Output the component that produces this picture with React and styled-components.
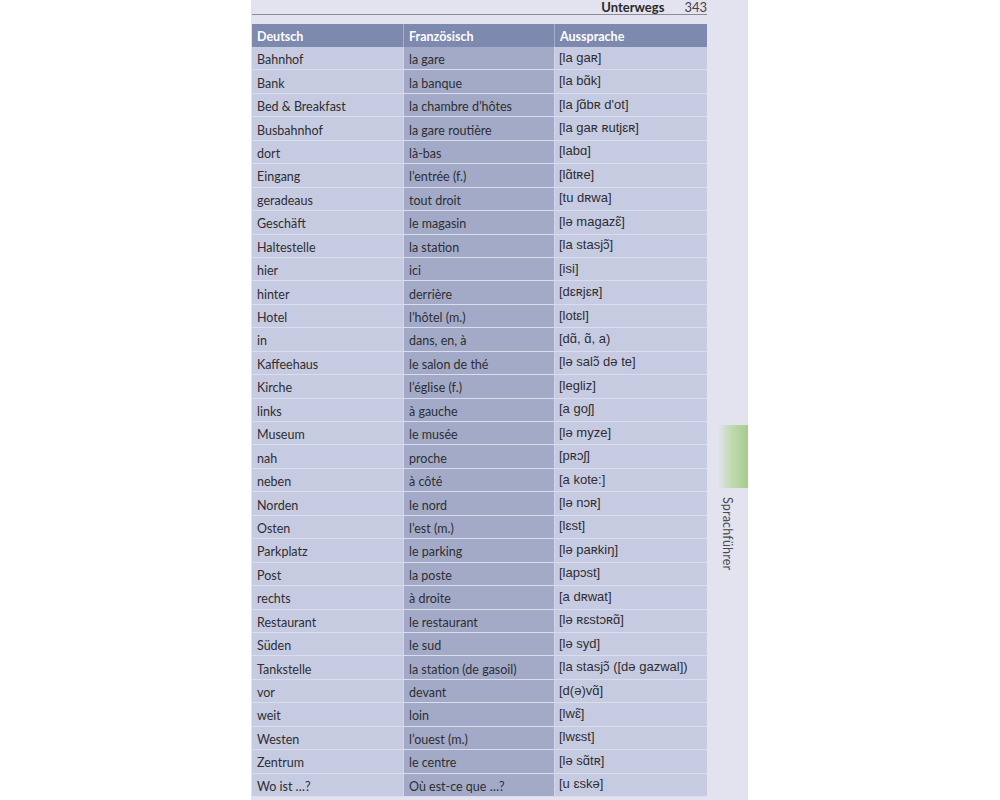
import React from "react";
import styled, { createGlobalStyle } from "styled-components";

const Global = createGlobalStyle`
  html, body { margin: 0; padding: 0; background: #ffffff; }
  body { font-family: Lato, "Open Sans", sans-serif; }
`;

const Page = styled.div`
  margin-left: 251px;
  width: 497px;
  height: 800px;
  background: #e2e3ef;
  display: flex;
  overflow: hidden;
`;

const Main = styled.div`
  width: 455px;
  margin-left: 1px;
  display: flex;
  flex-direction: column;
`;

const RunningHead = styled.div`
  height: 14px;
  border-bottom: 1px solid #8a8c98;
  display: flex;
  justify-content: flex-end;
  align-items: center;
  gap: 20px;
  font-size: 13px;
  line-height: 14px;
  color: #2a2a2a;
  margin-bottom: 9px;
`;

const Section = styled.span`
  font-weight: 700;
`;

const PageNo = styled.span`
  font-weight: 400;
  color: #444;
`;

const Table = styled.div`
  display: grid;
  grid-template-columns: 152px 151px 152px;
  grid-template-rows: 23px;
  grid-auto-rows: 23.45px;
`;

const HeadCell = styled.div`
  background: #7d89af;
  color: #ffffff;
  font-weight: 700;
  font-size: 12.5px;
  padding-left: 5px;
  padding-top: 1px;
  display: flex;
  align-items: center;
  border-right: ${(p) => (p.$last ? "none" : "1px solid #a7aecb")};
  box-sizing: border-box;
`;

const Cell = styled.div`
  box-sizing: border-box;
  background: ${(p) => (p.$dark ? "#a2aac8" : "#c6cbe1")};
  border-bottom: 1px solid #dadded;
  border-right: ${(p) => (p.$last ? "none" : "1px solid #d2d6e8")};
  padding-left: ${(p) => (p.$ipa ? "4px" : "5px")};
  display: flex;
  align-items: center;
  padding-top: ${(p) => (p.$ipa ? "0" : "3px")};
  padding-bottom: ${(p) => (p.$ipa ? "2px" : "0")};
  font-family: ${(p) =>
    p.$ipa ? '"Liberation Sans", "DejaVu Sans", sans-serif' : 'Lato, "Open Sans", sans-serif'};
  font-size: ${(p) => (p.$ipa ? "13px" : "12.5px")};
  color: #2e2e32;
  white-space: nowrap;
`;

const Side = styled.div`
  flex: 1;
  display: flex;
  flex-direction: column;
  align-items: flex-end;
  padding-top: 425px;
`;

const Tab = styled.div`
  width: 30px;
  height: 63px;
  background: linear-gradient(to right, #e2e3ef 0%, #c2d9b0 45%, #a7cb8c 100%);
`;

const TabLabel = styled.div`
  writing-mode: vertical-rl;
  font-family: Lato, "Open Sans", sans-serif;
  font-size: 12.5px;
  color: #4a4a50;
  margin-top: 9px;
  margin-right: 13px;
  letter-spacing: 0.2px;
`;

const rows = [
  ["Bahnhof", "la gare", "[la gaʀ]"],
  ["Bank", "la banque", "[la bɑ̃k]"],
  ["Bed & Breakfast", "la chambre d’hôtes", "[la ʃɑ̃bʀ d'ot]"],
  ["Busbahnhof", "la gare routière", "[la gaʀ ʀutjɛʀ]"],
  ["dort", "là-bas", "[labɑ]"],
  ["Eingang", "l’entrée (f.)", "[lɑ̃tʀe]"],
  ["geradeaus", "tout droit", "[tu dʀwa]"],
  ["Geschäft", "le magasin", "[lə magazɛ̃]"],
  ["Haltestelle", "la station", "[la stasjɔ̃]"],
  ["hier", "ici", "[isi]"],
  ["hinter", "derrière", "[dɛʀjɛʀ]"],
  ["Hotel", "l’hôtel (m.)", "[lotɛl]"],
  ["in", "dans, en, à", "[dɑ̃, ɑ̃, a)"],
  ["Kaffeehaus", "le salon de thé", "[lə salɔ̃ də te]"],
  ["Kirche", "l’église (f.)", "[legliz]"],
  ["links", "à gauche", "[a goʃ]"],
  ["Museum", "le musée", "[lə myze]"],
  ["nah", "proche", "[pʀɔʃ]"],
  ["neben", "à côté", "[a kote:]"],
  ["Norden", "le nord", "[lə nɔʀ]"],
  ["Osten", "l’est (m.)", "[lɛst]"],
  ["Parkplatz", "le parking", "[lə paʀkiŋ]"],
  ["Post", "la poste", "[lapɔst]"],
  ["rechts", "à droite", "[a dʀwat]"],
  ["Restaurant", "le restaurant", "[lə ʀɛstɔʀɑ̃]"],
  ["Süden", "le sud", "[lə syd]"],
  ["Tankstelle", "la station (de gasoil)", "[la stasjɔ̃ ([də gazwal])"],
  ["vor", "devant", "[d(ə)vɑ̃]"],
  ["weit", "loin", "[lwɛ̃]"],
  ["Westen", "l’ouest (m.)", "[lwɛst]"],
  ["Zentrum", "le centre", "[lə sɑ̃tʀ]"],
  ["Wo ist …?", "Où est-ce que …?", "[u ɛskə]"],
];

export default function App() {
  return (
    <>
      <Global />
      <Page>
        <Main>
          <RunningHead>
            <Section>Unterwegs</Section>
            <PageNo>343</PageNo>
          </RunningHead>
          <Table>
            <HeadCell>Deutsch</HeadCell>
            <HeadCell>Französisch</HeadCell>
            <HeadCell $last>Aussprache</HeadCell>
            {rows.map(([de, fr, ipa]) => (
              <React.Fragment key={de}>
                <Cell>{de}</Cell>
                <Cell $dark>{fr}</Cell>
                <Cell $ipa $last>{ipa}</Cell>
              </React.Fragment>
            ))}
          </Table>
        </Main>
        <Side>
          <Tab />
          <TabLabel>Sprachführer</TabLabel>
        </Side>
      </Page>
    </>
  );
}
